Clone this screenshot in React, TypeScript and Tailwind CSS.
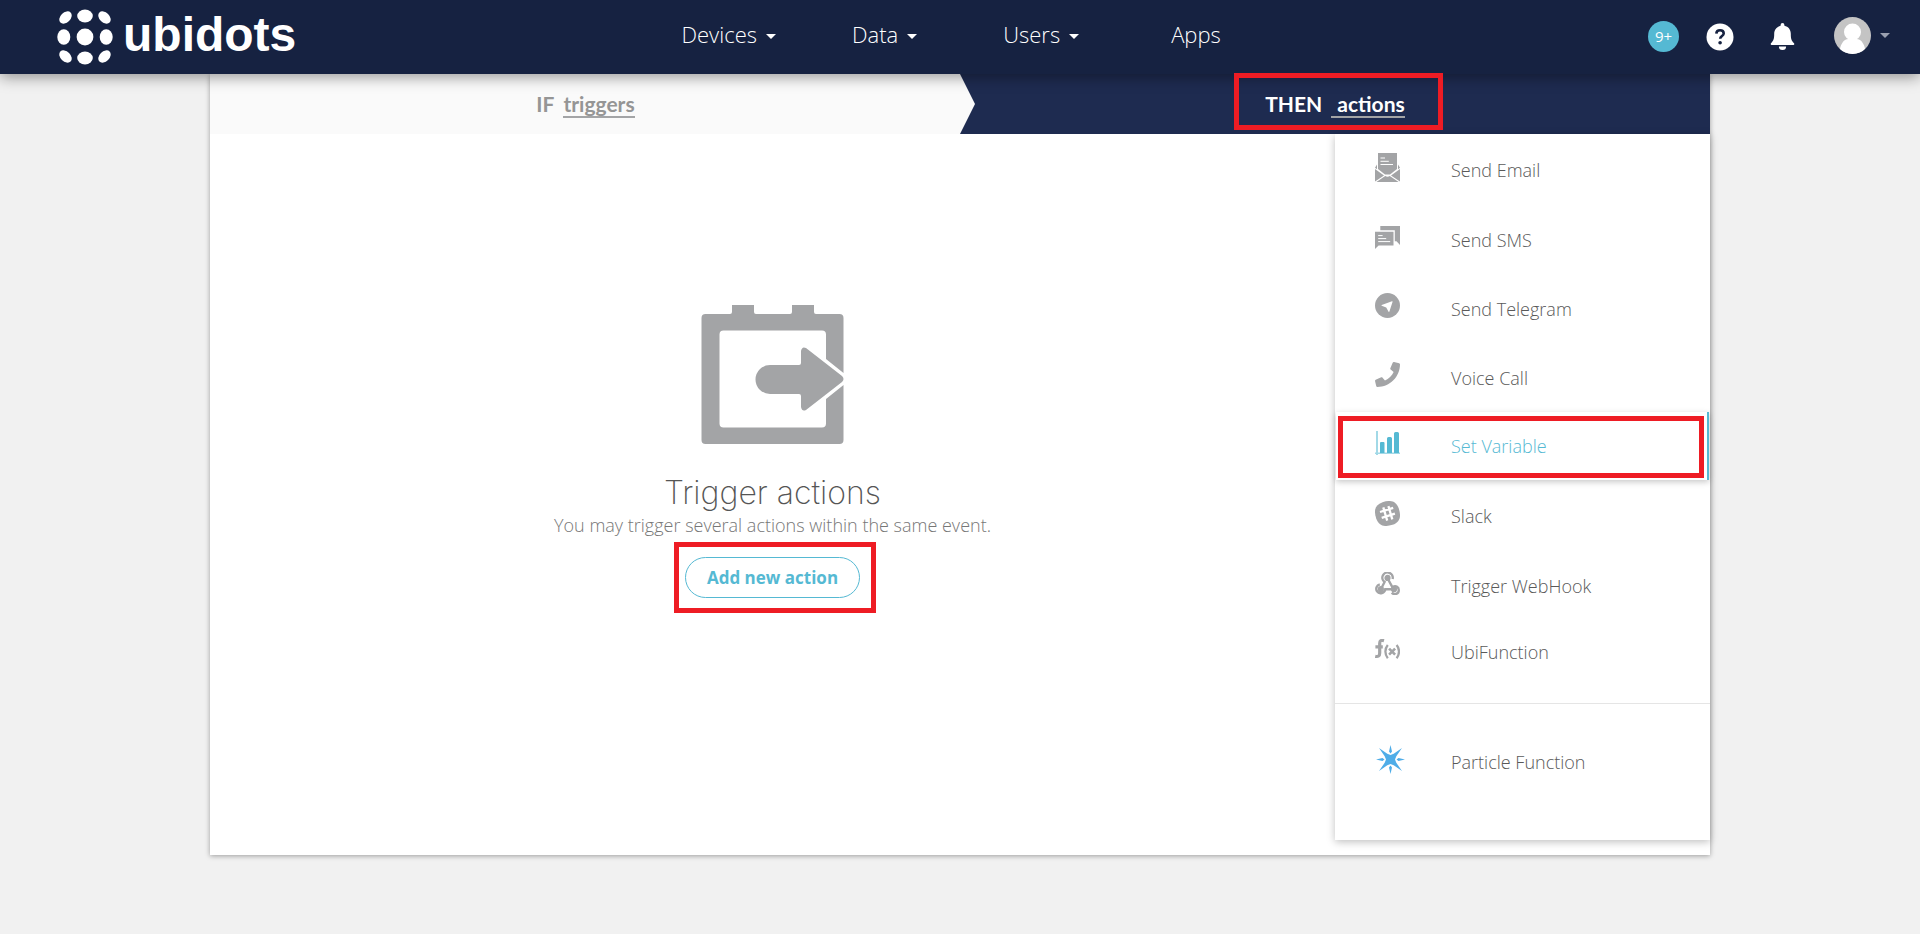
import type { ReactNode } from 'react';

const NAV_LINKS = [
  { label: 'Devices', caret: true, gap: 'pr-[76px]' },
  { label: 'Data', caret: true, gap: 'pr-[86px]' },
  { label: 'Users', caret: true, gap: 'pr-[92px]' },
  { label: 'Apps', caret: false, gap: 'pr-0' },
];

function Logo() {
  return (
    <a href="#" aria-label="ubidots" className="flex items-center gap-[10px] text-white">
      <svg width="56" height="56" viewBox="0 0 56 56" fill="currentColor" aria-hidden="true">
        <circle cx="28" cy="28" r="8.4" />
        <ellipse cx="28" cy="7" rx="7.8" ry="6.5" />
        <ellipse cx="28" cy="49" rx="7.8" ry="6.5" />
        <ellipse cx="6.8" cy="28" rx="6.5" ry="7.8" />
        <ellipse cx="49.2" cy="28" rx="6.5" ry="7.8" />
        <ellipse cx="8.5" cy="8.5" rx="7.2" ry="5" transform="rotate(-45 8.5 8.5)" />
        <ellipse cx="47.5" cy="8.5" rx="7.2" ry="5" transform="rotate(45 47.5 8.5)" />
        <ellipse cx="8.5" cy="47.5" rx="7.2" ry="5" transform="rotate(45 8.5 47.5)" />
        <ellipse cx="47.5" cy="47.5" rx="7.2" ry="5" transform="rotate(-45 47.5 47.5)" />
      </svg>
      <span className="pb-1 font-['Liberation_Sans',sans-serif] text-[48px] leading-[56px] font-bold">ubidots</span>
    </a>
  );
}

function Caret({ className }: { className: string }) {
  return (
    <svg width="10" height="5" viewBox="0 0 10 5" className={className} aria-hidden="true">
      <path d="M0 0h10L5 5z" fill="currentColor" />
    </svg>
  );
}

function EmailIcon() {
  return (
    <svg width="25" height="29" viewBox="0 0 25 29" fill="currentColor">
      <path d="M3 0h19v16l-7 5.5h-5L3 16z" />
      <path d="M2 11.5v4.8L0 14.8zM23 11.5v4.8l2-1.5z" />
      <path d="M0 16l9 6.5L0 28.4zM25 16l-9 6.5 9 5.9zM1.4 29l8.8-5.9c1.4 1 3.2 1 4.6 0l8.8 5.9z" />
      <path d="M5.5 5h4.5M5.5 8.3h8.3M5.5 11.5h12.5" stroke="#fff" strokeWidth="1" />
    </svg>
  );
}

function SmsIcon() {
  return (
    <svg width="25" height="23" viewBox="0 0 25 23" fill="currentColor">
      <path d="M5.3 0H25v19l-3.5-3.7h-1.7V4.3H5.3z" />
      <path d="M0 5.8h18.5v13.7H3.6L0 23z" />
      <path d="M3.2 9.6h4.4M3.2 12.6h8M3.2 15.6h12" stroke="#fff" strokeWidth="1" />
    </svg>
  );
}

function TelegramIcon() {
  return (
    <svg width="25" height="25" viewBox="0 0 25 25">
      <circle cx="12.5" cy="12.5" r="12.5" fill="currentColor" />
      <path d="M6.7 12.1L17 8.2c.4-.1.7.1.6.5l-3.2 9.9c-.1.4-.6.4-.8.1l-2.4-4.2-4.5-1.7c-.4-.2-.4-.6 0-.7z" fill="#fff" />
    </svg>
  );
}

function PhoneIcon() {
  return (
    <svg width="25" height="25" viewBox="0 0 512 512" fill="currentColor">
      <path d="M493.4 24.6l-104-24c-11.3-2.6-22.9 3.3-27.5 13.9l-48 112c-4.2 9.8-1.4 21.3 6.9 28l60.6 49.6c-36 76.7-98.9 140.5-177.2 177.2l-49.6-60.6c-6.8-8.3-18.2-11.1-28-6.9l-112 48C3.9 366.5-2 378.1.6 389.4l24 104C27.1 504.2 36.7 512 48 512c256.1 0 464-207.5 464-464 0-11.2-7.7-20.9-18.6-23.4z" />
    </svg>
  );
}

function ChartIcon() {
  return (
    <svg width="25" height="24" viewBox="0 0 25 24" fill="currentColor">
      <path d="M1 0h2v24H1zM0 21.5h25V23H0z" opacity=".55" />
      <path d="M5 12a1 1 0 0 1 1-1h2.500a1 1 0 0 1 1 1v10H5zM12 7.500a1.500 1.500 0 0 1 1.500-1.500h2a1.500 1.500 0 0 1 1.500 1.500V22h-5zM19 2.500A1.500 1.500 0 0 1 20.500 1h2A1.500 1.500 0 0 1 24 2.500V22h-5z" />
    </svg>
  );
}

function SlackIcon() {
  return (
    <svg width="25" height="25" viewBox="0 0 25 25">
      <path
        d="M7.500 1.200C15.500-1.300 21-.3 23.800 7.500 26.300 15.500 25.300 21 17.500 23.800 9.500 26.300 4 25.300 1.200 17.500-1.300 9.500-.3 4 7.500 1.200z"
        fill="currentColor"
      />
      <path d="M8.300 6.400l3.900 13.200M13.400 5.100l3.900 13.200M5 11l13.200-4.200M6.700 16.900l13.200-4.200" stroke="#fff" strokeWidth="2.300" fill="none" />
    </svg>
  );
}

function WebhookIcon() {
  return (
    <svg width="25" height="23" viewBox="0 0 25 23" fill="none" stroke="currentColor" strokeWidth="2.400">
      <path d="M17.600 7a5.200 5.200 0 1 0-8 3L6.500 16" />
      <path d="M12.500 6.200l5 9.200c3-2.400 6.300-.4 6.300 2.600 0 4.500-4.800 5.200-7 2.600" />
      <path d="M4.800 12.300C1.600 13.200.4 16.700 2 19.300c2.500 3.600 7.900 1.700 8.300-2.100h8" />
      <circle cx="12.500" cy="5.900" r="1.900" fill="currentColor" />
      <circle cx="5.900" cy="17.200" r="1.900" fill="currentColor" />
      <circle cx="19" cy="17.200" r="1.900" fill="currentColor" />
    </svg>
  );
}

function FunctionIcon() {
  return (
    <svg width="25" height="20" viewBox="0 0 25 20" fill="none" stroke="currentColor">
      <path d="M9 1.700C6.200.9 4.700 1.700 4.700 4.200V14c0 3-1.600 4-4.500 3.300M.4 7.800h7.400" strokeWidth="3.200" />
      <path d="M12.800 6c-3.200 3.800-3.200 9.400 0 13.200M21.600 6c3.200 3.800 3.200 9.400 0 13.200" strokeWidth="2.300" />
      <path d="M14.100 9.600l6 6M20.100 9.600l-6 6" strokeWidth="2.600" />
    </svg>
  );
}

function ParticleIcon() {
  return (
    <svg width="31" height="29" viewBox="0 0 31 29" fill="#4fade8">
      <path d="M4 3l8.300 5.700 3.200 1.300 3.200-1.300L27 3l-5.700 8.300-1.300 3.200 1.300 3.200L27 26l-8.300-5.700-3.200-1.300-3.200 1.300L4 26l5.700-8.300 1.300-3.200-1.300-3.200z" />
      <path d="M15.500 0l1.500 6.500-1.500 2-1.500-2zM15.500 29l1.500-6.500-1.500-2-1.500 2zM1 14.500l6.500-1.500 2 1.500-2 1.500zM30 14.500L23.500 13l-2 1.500 2 1.500z" />
    </svg>
  );
}

function ActionsIllustration() {
  return (
    <svg width="144" height="140" viewBox="0 0 144 140" fill="#a3a4a6" aria-hidden="true">
      <path
        fillRule="evenodd"
        d="M31 0h22v7q0 2 2 2h34q2 0 2-2V0h22v7q0 2 2 2h23.500q4 0 4 4v55L125 54V29.500q0-4-4-4H22.500q-4 0-4 4v89q0 4 4 4H121q4 0 4-4V94l17.500-14v55q0 4-4 4H4.500q-4 0-4-4V13q0-4 4-4H29q2 0 2-2z"
      />
      <path d="M69 60h29q2 0 2-2V46q1-5 5-3l36 28q3 3 0 6l-36 28q-4 2-5-3V91q0-2-2-2H69a14.500 14.500 0 0 1 0-29z" />
    </svg>
  );
}

type Action = { label: string; icon: ReactNode; height: string; active?: boolean };

const ACTIONS: Action[] = [
  { label: 'Send Email', icon: <EmailIcon />, height: 'h-[72px]' },
  { label: 'Send SMS', icon: <SmsIcon />, height: 'h-[68px]' },
  { label: 'Send Telegram', icon: <TelegramIcon />, height: 'h-[69px]' },
  { label: 'Voice Call', icon: <PhoneIcon />, height: 'h-[69px]' },
  { label: 'Set Variable', icon: <ChartIcon />, height: 'h-[68px]', active: true },
  { label: 'Slack', icon: <SlackIcon />, height: 'h-[72px]' },
  { label: 'Trigger WebHook', icon: <WebhookIcon />, height: 'h-[68px]' },
  { label: 'UbiFunction', icon: <FunctionIcon />, height: 'h-[64px]' },
];

function ActionItem({ label, icon, height, active }: Action) {
  return (
    <li className={active ? 'relative px-px' : 'px-px'}>
      <button
        type="button"
        className={`flex w-full items-center pl-[39px] text-left text-[18px] leading-6 font-light ${height} ${
          active ? 'border-r-2 border-[#55b9d3] text-[#55b9d3] shadow-[0_2px_6px_rgba(0,0,0,0.22)]' : 'text-[#595959]'
        }`}
      >
        <span className={`w-[76px] pb-[6px] ${active ? 'text-[#55b9d3]' : 'text-[#a3a4a6]'}`}>{icon}</span>
        <span>{label}</span>
      </button>
      {active && <span className="pointer-events-none absolute top-1 right-[6px] bottom-[2px] left-[3px] border-5 border-[#ee1c24]" />}
    </li>
  );
}

export default function App() {
  return (
    <div className="min-h-screen bg-[#f1f1f1] font-['Open_Sans',sans-serif]">
      <header className="relative z-10 flex h-[74px] items-center bg-[#162241] pl-[57px] text-white shadow-[0_3px_14px_rgba(0,0,0,0.4)]">
        <Logo />
        <nav className="flex flex-1 justify-center pr-[42px] pb-[6px] text-[22px] leading-8 font-light">
          {NAV_LINKS.map((link) => (
            <a key={link.label} href="#" className={`flex items-center gap-[9px] ${link.gap}`}>
              {link.label}
              {link.caret && <Caret className="mt-1" />}
            </a>
          ))}
        </nav>
        <div className="flex items-center pr-[30px] pb-px">
          <button type="button" className="mr-[27px] size-[31px] rounded-full bg-[#55b9d3] text-[15px] leading-[31px]">
            9+
          </button>
          <button type="button" aria-label="Help" className="mr-[36px]">
            <svg width="28" height="28" viewBox="0 0 28 28">
              <circle cx="14" cy="14" r="13.500" fill="#fff" />
              <path d="M10.300 10.600c.2-2.200 1.600-3.300 3.700-3.300 2.200 0 3.700 1.200 3.700 3.100 0 2.600-3.500 2.600-3.500 5.400" fill="none" stroke="#162241" strokeWidth="2.600" />
              <circle cx="14.100" cy="19.700" r="1.800" fill="#162241" />
            </svg>
          </button>
          <button type="button" aria-label="Notifications" className="mr-[39px]">
            <svg width="25" height="28" viewBox="0 0 25 28" fill="#fff">
              <path d="M12.500 0a1.900 1.900 0 0 1 1.900 1.900v.9c4 .9 6.400 4 6.400 8 0 5.500.8 7 3 9.200 1 1 .4 2-.8 2H2c-1.200 0-1.800-1-.8-2 2.200-2.200 3-3.700 3-9.200 0-4 2.400-7.100 6.400-8v-.9A1.900 1.900 0 0 1 12.500 0zM8.900 23.500h7.200a3.600 3.600 0 0 1-7.200 0z" />
            </svg>
          </button>
          <button type="button" aria-label="Account" className="flex items-center gap-[9px] pb-[2px] text-[#9aa0b0]">
            <svg width="37" height="37" viewBox="0 0 37 37">
              <defs>
                <clipPath id="avatar">
                  <circle cx="18.500" cy="18.500" r="18.500" />
                </clipPath>
              </defs>
              <g clipPath="url(#avatar)">
                <path d="M0 0h37v37H0z" fill="#c4c4c4" />
                <circle cx="18.500" cy="15" r="8.500" fill="#fff" />
                <path d="M5.500 37c0-9 4-15 9-15h8c5 0 9 6 9 15z" fill="#fff" />
              </g>
            </svg>
            <Caret className="" />
          </button>
        </div>
      </header>

      <main className="mx-auto w-[78.125%] bg-white shadow-[0_1px_5px_rgba(0,0,0,0.35)]">
        <div role="tablist" className="flex h-[60px] bg-[#1e2b50] font-['Lato',sans-serif] text-[21px] leading-6 font-bold">
          <button
            type="button"
            role="tab"
            aria-selected="false"
            className="flex w-[51%] items-center justify-center gap-[9px] bg-[#fafafa] pr-[14px] text-[#959595] [clip-path:polygon(0_0,calc(100%_-_15px)_0,100%_50%,calc(100%_-_15px)_100%,0_100%)]"
          >
            <span>IF</span>
            <span className="border-b-2 border-[#a3a4a6] pt-[2px]">triggers</span>
          </button>
          <div className="flex w-[49%] items-stretch justify-center pr-2">
            <button type="button" role="tab" aria-selected="true" className="relative flex items-center gap-[9px] pr-[38px] pl-[31px] text-white">
              <span>THEN</span>
              <span className="border-b-2 border-[#a3a4a6] pt-[2px] pl-[6px]">actions</span>
              <span className="pointer-events-none absolute inset-x-0 -top-px bottom-1 z-20 border-5 border-[#ee1c24]" />
            </button>
          </div>
        </div>

        <div className="flex pb-[15px]">
          <section className="flex flex-[3] flex-col items-center pt-[171px]">
            <ActionsIllustration />
            <h1 className="mt-[28px] font-['Inter',sans-serif] text-[32px] leading-10 font-extralight text-[#555]">Trigger actions</h1>
            <p className="text-[18px] leading-6 font-light text-[#777]">You may trigger several actions within the same event.</p>
            <div className="relative mt-5">
              <button
                type="button"
                className="block h-[41px] rounded-full border border-[#55b9d3] px-[21px] text-[17px] leading-6 font-bold text-[#55b9d3]"
              >
                Add new action
              </button>
              <span className="pointer-events-none absolute -inset-y-[15px] -right-[16px] -left-[11px] border-5 border-[#ee1c24]" />
            </div>
          </section>

          <aside className="flex-1 bg-white shadow-[0_2px_8px_rgba(0,0,0,0.25)]">
            <ul className="border-b border-[#e5e5e5] pb-[19px]">
              {ACTIONS.map((action) => (
                <ActionItem key={action.label} {...action} />
              ))}
            </ul>
            <ul className="pt-[22px] pb-[42px]">
              <ActionItem label="Particle Function" icon={<ParticleIcon />} height="h-[72px]" />
            </ul>
          </aside>
        </div>
      </main>
    </div>
  );
}
